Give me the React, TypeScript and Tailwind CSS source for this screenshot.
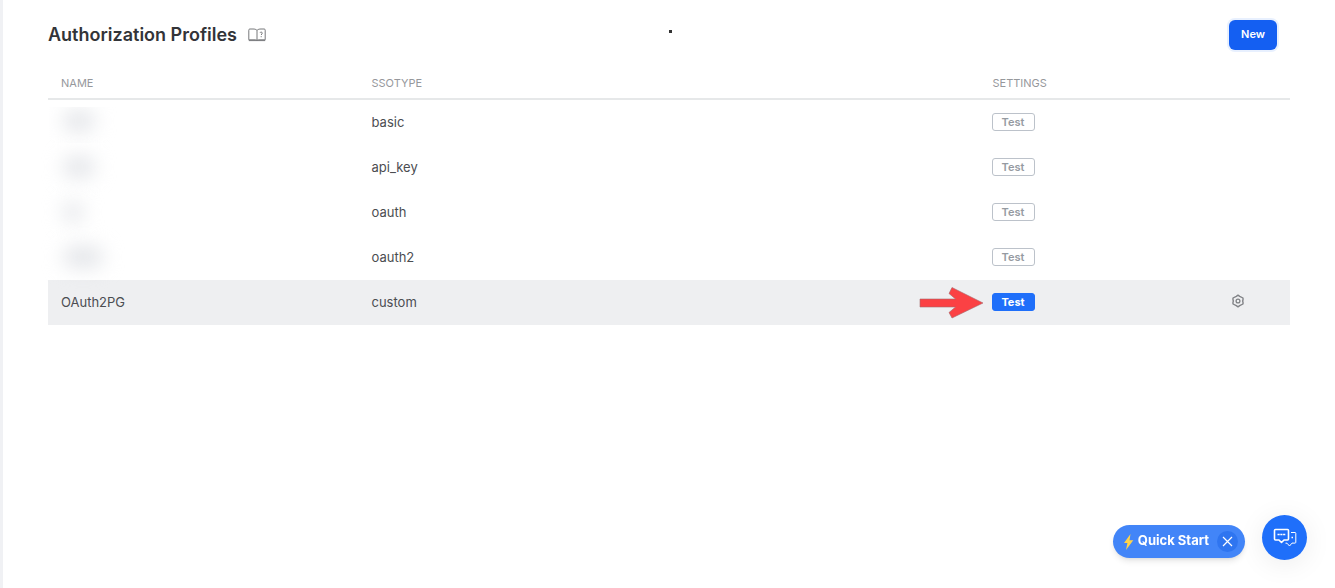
import { clsx } from "clsx";

type Profile = {
  name: string | null;
  maskWidth?: string;
  clipped?: boolean;
  ssoType: string;
  active?: boolean;
};

const profiles: Profile[] = [
  { name: null, maskWidth: "w-8", clipped: true, ssoType: "basic" },
  { name: null, maskWidth: "w-8", ssoType: "api_key" },
  { name: null, maskWidth: "w-5", ssoType: "oauth" },
  { name: null, maskWidth: "w-10", ssoType: "oauth2" },
  { name: "OAuth2PG", ssoType: "custom", active: true },
];

function BookIcon() {
  return (
    <svg width="18" height="14" viewBox="0 0 18 14" fill="none" stroke="#77787b" strokeWidth="1">
      <path d="M9 2.5C8 1.2 6.5 1 5 1H1.8C1 1 .8 1.5.8 2.2v9.6h6.4c.8 0 1.4.2 1.8.7.4-.5 1-.7 1.8-.7h6.4V2.2c0-.7-.2-1.2-1-1.2H13c-1.5 0-3 .2-4 1.5z" />
      <path d="M9 2.5v10M.8 12.6h16.4" />
      <path d="M12 4.8c.2-1 2.3-1 2.3.3 0 .9-1.1.9-1.1 1.9M13.2 8.2v1" />
    </svg>
  );
}

function GearIcon() {
  return (
    <svg width="14" height="14" viewBox="0 0 14 14" fill="none" stroke="#808286" strokeLinejoin="round">
      <path
        d="M7 1.2l1.7 1.1 3.300 1.700v2l-.4 1 .4 1v2l-3.300 1.700L7 12.800l-1.700-1.100L2 10V8l.4-1L2 6V4l3.300-1.700z"
        strokeWidth="1.400"
      />
      <circle cx="7" cy="7" r="1.900" strokeWidth="1.300" />
    </svg>
  );
}

function Arrow() {
  return (
    <svg
      className="pointer-events-none absolute right-full top-1/2 mr-2 -translate-y-1/2"
      width="65"
      height="34"
      viewBox="0 0 65 34"
      aria-hidden="true"
    >
      <path
        d="M1 14h35.500L30 8.500 33 2.500 64 18 33 33 30 27.500 36.500 22H1z"
        fill="#fb4144"
        stroke="#a5686c"
        strokeWidth="0.600"
      />
    </svg>
  );
}

function BoltIcon() {
  return (
    <svg width="11" height="18" viewBox="0 0 11 18" fill="#ffd34a">
      <path d="M7.500 1L1 10h3.400L3 17 10.300 7.300H6.500z" />
    </svg>
  );
}

function ChatIcon() {
  return (
    <svg width="24" height="20" viewBox="0 0 24 20" fill="none" stroke="#fff" strokeLinejoin="round">
      <path d="M2.500 1.500h12c.6 0 1 .4 1 1v8.500c0 .6-.4 1-1 1h-3.500L8.500 14.500 6 12H2.500c-.6 0-1-.4-1-1V2.500c0-.6.4-1 1-1z" strokeWidth="1.600" />
      <path d="M4.500 6.500h8" strokeWidth="1.500" strokeDasharray="2.200 .6" />
      <path d="M18 4.500h4c.500 0 .8.300.8.800v9c0 .500-.3.800-.8.800h-3L16.500 18 14 15.200h-1.500" strokeWidth="1" />
      <path d="M18.500 9.500h1.500" strokeWidth="1.500" />
    </svg>
  );
}

function ProfileName({ profile }: { profile: Profile }) {
  if (profile.name) return <>{profile.name}</>;
  return (
    <div
      className={clsx(
        "-mx-3 flex px-[14px]",
        profile.clipped ? "mt-[7px] h-9 overflow-hidden pt-1" : "h-[43px] items-center"
      )}
    >
      <div className={clsx("h-5 rounded-full bg-[#e1e3e7] blur-[10px]", profile.maskWidth)} />
    </div>
  );
}

export default function App() {
  return (
    <div className="min-h-screen border-l-3 border-[#f0f1f4] bg-white pl-[45px] pr-[45px] font-['Inter',sans-serif] text-[#4b4d51]">
      <header className="grid grid-cols-3 items-center pt-5 pr-[13px]">
        <div className="flex items-center gap-[11px]">
          <h1 className="whitespace-nowrap text-lg leading-7 font-semibold text-[#333438]">
            Authorization Profiles
          </h1>
          <a href="#docs" aria-label="Documentation">
            <BookIcon />
          </a>
        </div>
        <span className="mb-2 ml-4 size-[3px] justify-self-center bg-[#333]" />
        <button className="h-[30px] justify-self-end rounded-md bg-[#145ff2] px-3 pb-0.5 text-[11px] font-semibold text-white ring-2 ring-[#e8f0fe]">
          New
        </button>
      </header>

      <table className="mt-4 w-full table-fixed text-left text-[13px] leading-5">
        <thead>
          <tr className="h-[33px] border-b-2 border-[#e6e8e9] text-[11px] text-[#96989c]">
            <th className="w-1/4 px-[13px] pt-0.5 font-normal">NAME</th>
            <th className="w-1/2 px-[13px] pt-0.5 font-normal">SSOTYPE</th>
            <th className="w-1/4 px-[13px] pt-0.5 font-normal">SETTINGS</th>
          </tr>
        </thead>
        <tbody>
          {profiles.map((profile) => (
            <tr key={profile.ssoType} className={clsx("h-[45px]", profile.active && "bg-[#eeeff1]")}>
              <td className="px-[13px] pt-0 pb-0.5">
                <ProfileName profile={profile} />
              </td>
              <td className="px-[13px] pt-0 pb-0.5">{profile.ssoType}</td>
              <td className="px-3 pt-0 pb-0.5">
                <div className="flex items-center justify-between pr-[33px]">
                  <div className="relative flex">
                    {profile.active && <Arrow />}
                    <button
                      className={clsx(
                        "h-[18px] w-[43px] rounded-[3px] border text-[11px] leading-4",
                        profile.active
                          ? "border-[#1f6ffa] bg-[#1f6ffa] font-bold text-white"
                          : "border-[#bcc2ca] bg-white font-semibold text-[#959aa1]"
                      )}
                    >
                      Test
                    </button>
                  </div>
                  {profile.active && (
                    <button aria-label="Profile settings" className="pb-0.5">
                      <GearIcon />
                    </button>
                  )}
                </div>
              </td>
            </tr>
          ))}
        </tbody>
      </table>

      <div className="fixed right-7 bottom-7 flex items-center gap-[17px]">
        <div className="mt-2 flex h-[33px] items-center rounded-full bg-[#4285f8] pr-[7px] pl-[10px] text-white shadow-md">
          <BoltIcon />
          <button className="ml-1 pb-0.5 text-[13px] font-bold">Quick Start</button>
          <button
            aria-label="Close quick start"
            className="ml-2 flex size-[21px] items-center justify-center rounded-full bg-[#2f75f0]"
          >
            <svg width="11" height="11" viewBox="0 0 11 11" stroke="#fff" strokeWidth="1.200">
              <path d="M1 1l9 9M10 1l-9 9" />
            </svg>
          </button>
        </div>
        <button
          aria-label="Open chat"
          className="flex size-[45px] items-center justify-center rounded-full bg-[#1f6ffa] shadow-[0_4px_28px_rgba(0,0,0,0.08)]"
        >
          <ChatIcon />
        </button>
      </div>
    </div>
  );
}
